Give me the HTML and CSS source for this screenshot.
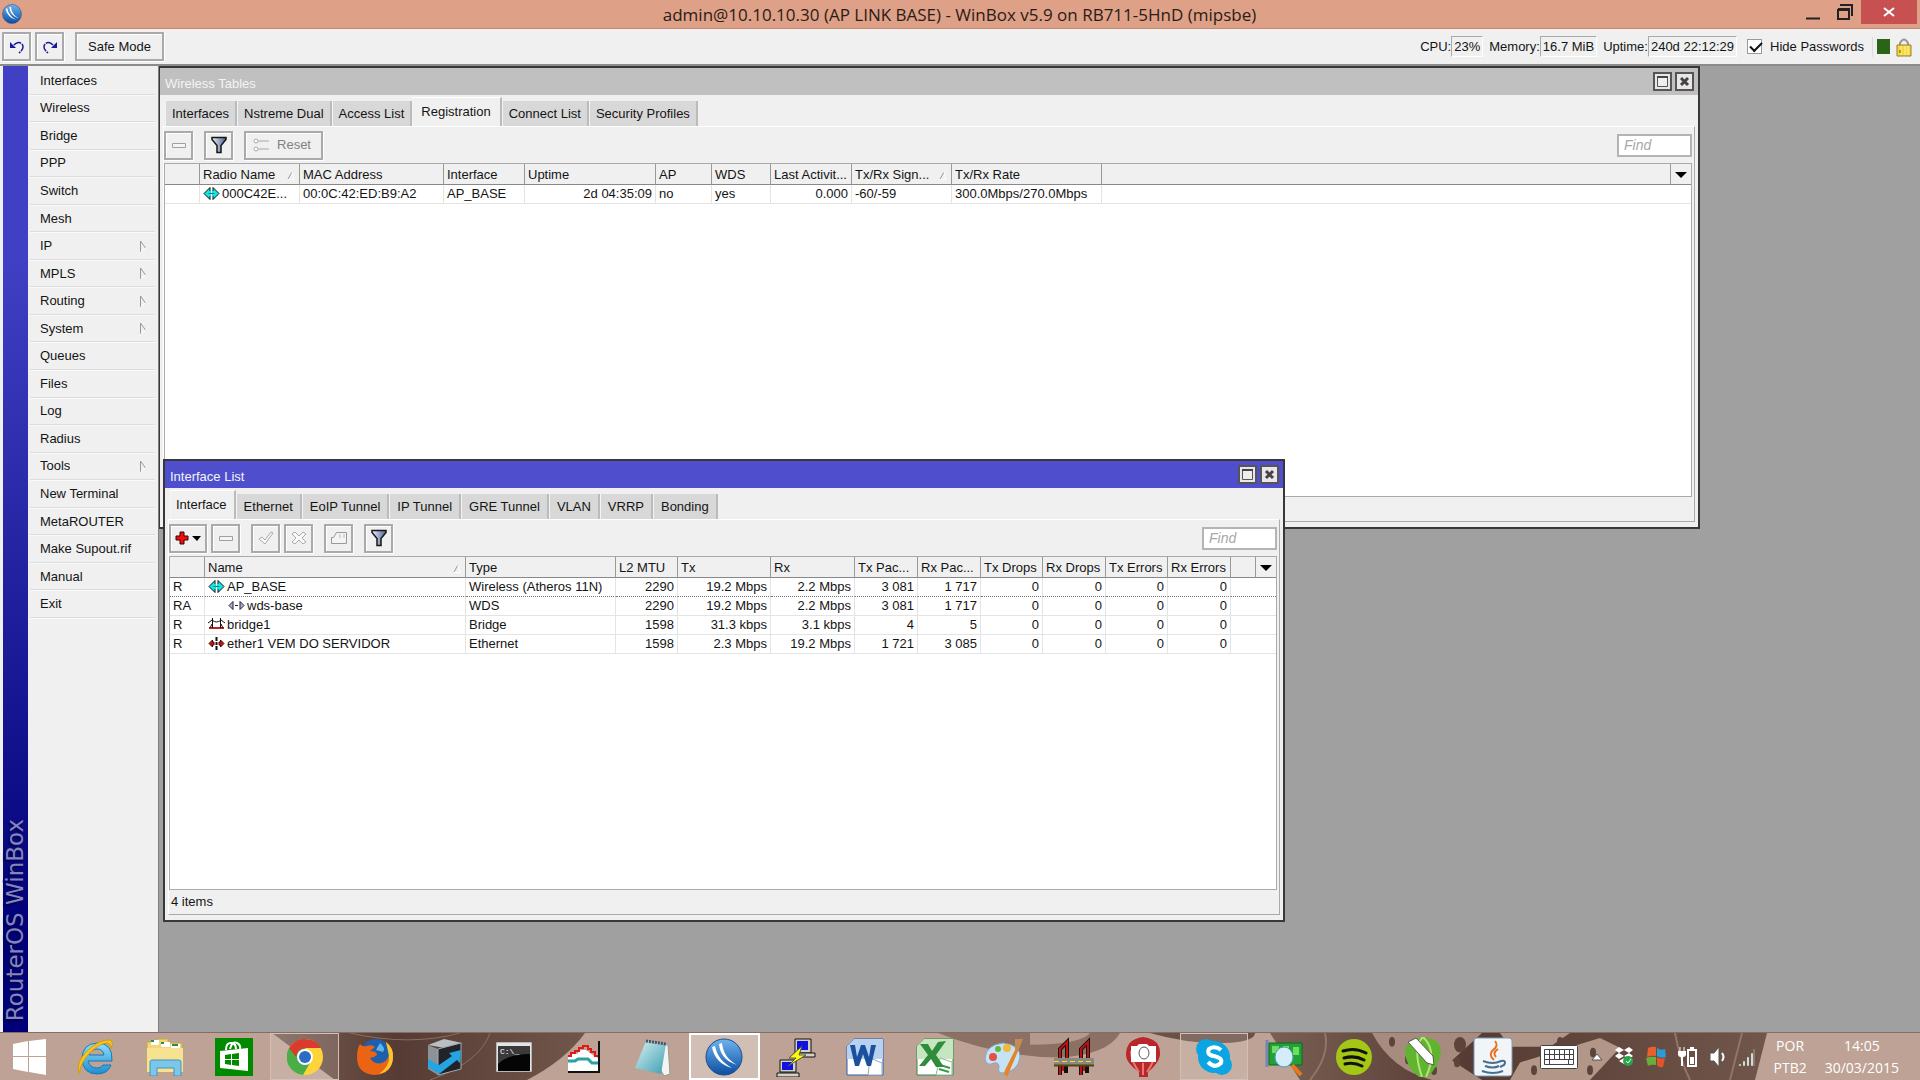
FILE: index.html
```html
<!DOCTYPE html>
<html lang="en">
<head>
  <meta charset="UTF-8">
  <meta name="viewport" content="width=device-width,initial-scale=1.0">
  <title>WinBox v5.9</title>
  <link rel="stylesheet" href="styles.css">
</head>
<body>
  <!-- shared icons -->
  <svg class="defs">
    <linearGradient id="g-blue" x1="0" y1="0" x2="0" y2="1"><stop offset="0" stop-color="#6db4ee"/><stop offset="1" stop-color="#0c4da2"/></linearGradient>
    <linearGradient id="g-ie" x1="0" y1="0" x2="0" y2="1"><stop offset="0" stop-color="#8fe0fb"/><stop offset="1" stop-color="#1d8ed0"/></linearGradient>
    <linearGradient id="g-paper" x1="0" y1="0" x2="1" y2="1"><stop offset="0" stop-color="#d8f1f5"/><stop offset="1" stop-color="#3d9fb0"/></linearGradient>
    <linearGradient id="g-funnel"><stop offset="0" stop-color="#eef2fa"/><stop offset="1" stop-color="#4a5e96"/></linearGradient>
    <linearGradient id="g-tank"><stop offset="0" stop-color="#7a5f54"/><stop offset=".4" stop-color="#553b33"/><stop offset="1" stop-color="#71564b"/></linearGradient>
    <symbol id="i-winbox" viewBox="0 0 38 38">
      <ellipse cx="19" cy="19" rx="18" ry="18" fill="url(#g-blue)" stroke="#1c4c8c"/>
      <path d="M7 9c2 11 9 18 20 21-9-5-15-12-17-22zM14 6c1 10 6 17 18 21-9-5-14-12-15-22z" fill="#fff"/>
    </symbol>
    <symbol id="i-wlan" viewBox="0 0 17 15">
      <path d="M1 7.500L7 1.500v12zM16 7.500L10 1.500v12z" fill="#10e8e8" stroke="#111"/>
      <path d="M7 5v5M10 5v5" stroke="#10e8e8" stroke-width="2"/>
      <path d="M5.500 7.500h6" stroke="#088" />
    </symbol>
    <symbol id="i-wds" viewBox="0 0 17 15">
      <path d="M1 7.500L5 3.500v8zM16 7.500L12 3.500v8z" fill="#b9a8e6" stroke="#222"/>
      <path d="M7 7.500h3" stroke="#222"/>
    </symbol>
    <symbol id="i-bridge" viewBox="0 0 17 15">
      <path d="M1 11h15" stroke="#b22" stroke-width="2"/>
      <path d="M4.500 1v10M12.500 1v10M0 6l4-3q4.500 4 9 0l4 3M2 11l2-4M15 11l-2-4" fill="none" stroke="#111"/>
    </symbol>
    <symbol id="i-eth" viewBox="0 0 17 15">
      <path d="M1 7.500L4.500 4v2H6v3H4.500v2zM16 7.500L12.500 4v2H11v3h1.500v2z" fill="#c01818" stroke="#500"/>
      <path d="M8.500 1v4M8.500 6v3M8.500 10v4" stroke="#111" stroke-width="2"/>
    </symbol>
    <symbol id="i-minus" viewBox="0 0 16 16"><path d="M1.500 6.500h13v4h-13z" fill="#f4f4f4" stroke="#a0a0a0"/></symbol>
    <symbol id="i-filter" viewBox="0 0 16 18"><path d="M1 1.500h14v2l-5 6v7H6v-7l-5-6z" fill="url(#g-funnel)" stroke="#161616" stroke-width="1.500"/></symbol>
    <symbol id="i-max" viewBox="0 0 13 13"><path d="M1.500 2.500h10v9h-10z" fill="#eee" stroke="#555"/><path d="M1 2h11" stroke="#444" stroke-width="2"/></symbol>
    <symbol id="i-close" viewBox="0 0 13 13"><path d="M3 3l7 7M10 3l-7 7" stroke="#444" stroke-width="3"/></symbol>
    <symbol id="i-sort" viewBox="0 0 8 9"><path d="M1 8l4-7" stroke="#999"/><path d="M5 1l2 7.500H1" fill="none" stroke="#fff"/></symbol>
    <symbol id="i-sub" viewBox="0 0 8 13"><path d="M1.500 12V1l5 7" fill="none" stroke="#999"/><path d="M6.500 8l-5 4" stroke="#fff"/></symbol>
    <symbol id="i-down" viewBox="0 0 12 6"><path d="M0 0h12L6 6z"/></symbol>
  </svg>

  <header class="titlebar">
    <svg class="logo"><use href="#i-winbox"/></svg>
    <h1>admin@10.10.10.30 (AP LINK BASE) - WinBox v5.9 on RB711-5HnD (mipsbe)</h1>
    <div class="caption">
      <button aria-label="Minimize"><svg width="16" height="18"><path d="M1 15.500h14" stroke="#222" stroke-width="2"/></svg></button>
      <button aria-label="Restore"><svg width="16" height="18"><path d="M3 2h12v11M1 7h11v9H1zM1 6h12" fill="none" stroke="#222" stroke-width="2"/></svg></button>
      <button class="close" aria-label="Close"><svg width="12" height="12"><path d="M1 2l10 8M11 2L1 10" stroke="#fff" stroke-width="2"/></svg></button>
    </div>
  </header>

  <div class="toolbar">
    <button class="btn" aria-label="Undo"><svg width="16" height="14"><path d="M1 2v6h6z" fill="#1a1a9c"/><path d="M5 5c3-4 9-3 9 2 0 3-2 4-4 6" fill="none" stroke="#1a1a9c" stroke-width="1.500" stroke-dasharray="8 1"/></svg></button>
    <button class="btn" aria-label="Redo"><svg width="16" height="14"><path d="M15 2v6H9z" fill="#1a1a9c"/><path d="M11 5C8 1 2 2 2 7c0 3 2 4 4 6" fill="none" stroke="#1a1a9c" stroke-width="1.500" stroke-dasharray="8 1"/></svg></button>
    <button class="btn safe">Safe Mode</button>
    <div class="status">
      <div class="stat">CPU:<output>23%</output></div>
      <div class="stat">Memory:<output>16.7 MiB</output></div>
      <div class="stat">Uptime:<output>240d 22:12:29</output></div>
      <label class="hide"><input type="checkbox" checked>Hide Passwords</label>
      <div class="lights">
        <div class="load"></div>
        <svg width="16" height="20"><path d="M4 10V6q4-7 8 0v4" fill="none" stroke="#999" stroke-width="2"/><path d="M1 8h14v11H1z" fill="#f5d840" stroke="#96802a"/><path d="M5 9v9M9 9v9M12 9v9" stroke="#fff3a0"/><path d="M4 13v3" stroke="#5a4a10"/></svg>
      </div>
    </div>
  </div>

  <main class="main">
    <div class="brand"><span>RouterOS WinBox</span></div>
    <nav class="menu">
      <button>Interfaces</button>
      <button>Wireless</button>
      <button>Bridge</button>
      <button>PPP</button>
      <button>Switch</button>
      <button>Mesh</button>
      <button>IP<svg><use href="#i-sub"/></svg></button>
      <button>MPLS<svg><use href="#i-sub"/></svg></button>
      <button>Routing<svg><use href="#i-sub"/></svg></button>
      <button>System<svg><use href="#i-sub"/></svg></button>
      <button>Queues</button>
      <button>Files</button>
      <button>Log</button>
      <button>Radius</button>
      <button>Tools<svg><use href="#i-sub"/></svg></button>
      <button>New Terminal</button>
      <button>MetaROUTER</button>
      <button>Make Supout.rif</button>
      <button>Manual</button>
      <button>Exit</button>
    </nav>

    <div class="desktop">
      <section class="window wireless">
        <div class="wtitle">
          <h2>Wireless Tables</h2>
          <button aria-label="Maximize"><svg width="13" height="13"><use href="#i-max"/></svg></button>
          <button aria-label="Close"><svg width="13" height="13"><use href="#i-close"/></svg></button>
        </div>
        <div class="tabs">
          <button>Interfaces</button><button>Nstreme Dual</button><button>Access List</button><button class="active">Registration</button><button>Connect List</button><button>Security Profiles</button>
        </div>
        <div class="panel">
          <div class="tools">
            <button class="btn" disabled aria-label="Remove"><svg width="16" height="16"><use href="#i-minus"/></svg></button>
            <button class="btn gap" aria-label="Filter"><svg width="16" height="18"><use href="#i-filter"/></svg></button>
            <button class="btn reset gap" disabled><svg width="16" height="14"><path d="M5 3h11M5 11h11" stroke="#aaa"/><circle cx="3" cy="3" r="2" fill="#fff" stroke="#aaa"/><circle cx="3" cy="11" r="2" fill="#fff" stroke="#aaa"/></svg>Reset</button>
            <input class="find" type="text" placeholder="Find" aria-label="Find">
          </div>
          <div class="grid">
            <table>
              <colgroup><col class="w35"><col class="w100"><col class="w144"><col class="w81"><col class="w131"><col class="w56"><col class="w59"><col class="w81"><col class="w100"><col class="w150"><col><col class="w20"></colgroup>
              <thead>
                <tr><th></th><th>Radio Name<svg class="sort"><use href="#i-sort"/></svg></th><th>MAC Address</th><th>Interface</th><th>Uptime</th><th>AP</th><th>WDS</th><th>Last Activit...</th><th>Tx/Rx Sign...<svg class="sort"><use href="#i-sort"/></svg></th><th>Tx/Rx Rate</th><th></th><th class="more"><svg><use href="#i-down"/></svg></th></tr>
              </thead>
              <tbody>
                <tr><td></td><td><svg class="ico"><use href="#i-wlan"/></svg>000C42E...</td><td>00:0C:42:ED:B9:A2</td><td>AP_BASE</td><td class="num">2d 04:35:09</td><td>no</td><td>yes</td><td class="num">0.000</td><td>-60/-59</td><td>300.0Mbps/270.0Mbps</td><td colspan="2"></td></tr>
              </tbody>
            </table>
          </div>
          <div class="foot"></div>
        </div>
      </section>

      <section class="window interfaces focused">
        <div class="wtitle">
          <h2>Interface List</h2>
          <button aria-label="Maximize"><svg width="13" height="13"><use href="#i-max"/></svg></button>
          <button aria-label="Close"><svg width="13" height="13"><use href="#i-close"/></svg></button>
        </div>
        <div class="tabs">
          <button class="active">Interface</button><button>Ethernet</button><button>EoIP Tunnel</button><button>IP Tunnel</button><button>GRE Tunnel</button><button>VLAN</button><button>VRRP</button><button>Bonding</button>
        </div>
        <div class="panel">
          <div class="tools">
            <button class="btn add" aria-label="Add"><svg width="28" height="16"><path d="M6 2h4v4h4v4h-4v4H6v-4H2V6h4z" fill="#e81010" stroke="#400"/><path d="M18 6h9l-4 5z"/></svg></button>
            <button class="btn" disabled aria-label="Remove"><svg width="16" height="16"><use href="#i-minus"/></svg></button>
            <button class="btn gap" disabled aria-label="Enable"><svg width="16" height="16"><path d="M1 9l3-2 3 3 6-8 2 1-8 11z" fill="#f8f8f8" stroke="#aaa"/></svg></button>
            <button class="btn" disabled aria-label="Disable"><svg width="16" height="16"><path d="M1 4l3-2 4 4 4-4 3 2-4 4 4 4-3 2-4-4-4 4-3-2 4-4z" fill="#f8f8f8" stroke="#aaa"/></svg></button>
            <button class="btn gap" disabled aria-label="Comment"><svg width="18" height="16"><path d="M6.500 2.500h10v11h-15v-6h2z" fill="#f4f4f4" stroke="#999"/><path d="M9 5h2M9 7h2M13 5h2M13 7h2" stroke="#bbb"/></svg></button>
            <button class="btn gap" aria-label="Filter"><svg width="16" height="18"><use href="#i-filter"/></svg></button>
            <input class="find" type="text" placeholder="Find" aria-label="Find">
          </div>
          <div class="grid">
            <table>
              <colgroup><col class="w35"><col class="w261"><col class="w150"><col class="w62"><col class="w93"><col class="w84"><col class="w63"><col class="w63"><col class="w62"><col class="w63"><col class="w62"><col class="w63"><col><col class="w20"></colgroup>
              <thead>
                <tr><th></th><th>Name<svg class="sort"><use href="#i-sort"/></svg></th><th>Type</th><th>L2 MTU</th><th>Tx</th><th>Rx</th><th>Tx Pac...</th><th>Rx Pac...</th><th>Tx Drops</th><th>Rx Drops</th><th>Tx Errors</th><th>Rx Errors</th><th></th><th class="more"><svg><use href="#i-down"/></svg></th></tr>
              </thead>
              <tbody>
                <tr class="current"><td>R</td><td><svg class="ico"><use href="#i-wlan"/></svg>AP_BASE</td><td>Wireless (Atheros 11N)</td><td class="num">2290</td><td class="num">19.2 Mbps</td><td class="num">2.2 Mbps</td><td class="num">3 081</td><td class="num">1 717</td><td class="num">0</td><td class="num">0</td><td class="num">0</td><td class="num">0</td><td colspan="2"></td></tr>
                <tr><td>RA</td><td class="child"><svg class="ico"><use href="#i-wds"/></svg>wds-base</td><td>WDS</td><td class="num">2290</td><td class="num">19.2 Mbps</td><td class="num">2.2 Mbps</td><td class="num">3 081</td><td class="num">1 717</td><td class="num">0</td><td class="num">0</td><td class="num">0</td><td class="num">0</td><td colspan="2"></td></tr>
                <tr><td>R</td><td><svg class="ico"><use href="#i-bridge"/></svg>bridge1</td><td>Bridge</td><td class="num">1598</td><td class="num">31.3 kbps</td><td class="num">3.1 kbps</td><td class="num">4</td><td class="num">5</td><td class="num">0</td><td class="num">0</td><td class="num">0</td><td class="num">0</td><td colspan="2"></td></tr>
                <tr><td>R</td><td><svg class="ico"><use href="#i-eth"/></svg>ether1 VEM DO SERVIDOR</td><td>Ethernet</td><td class="num">1598</td><td class="num">2.3 Mbps</td><td class="num">19.2 Mbps</td><td class="num">1 721</td><td class="num">3 085</td><td class="num">0</td><td class="num">0</td><td class="num">0</td><td class="num">0</td><td colspan="2"></td></tr>
              </tbody>
            </table>
          </div>
          <div class="foot">4 items</div>
        </div>
      </section>
    </div>
  </main>

  <footer class="taskbar">
    <!-- wallpaper showing through the glass -->
    <svg class="wallpaper" viewBox="0 0 1920 48" preserveAspectRatio="none">
      <path d="M272 0h313q-20 28-58 48H335z" fill="url(#g-tank)"/>
      <path d="M350 0q60 14 110 0M430 48Q480 30 490 0" fill="none" stroke="#8a6d61"/>
      <path d="M938 0h182q-12 22-60 25-60 0-122-25z" fill="#8d7064"/>
      <path d="M1030 0h60q-10 12-60 12z" fill="#b49a8d"/>
      <path d="M1150 0h105q0 8-25 10-40 2-80-10z" fill="#6b5046"/>
      <path d="M1270 0h497l-12 48H1300z" fill="url(#g-tank)"/>
      <path d="M1372 0q20 38 60 48h50l-30-20 30-28z" fill="#a78b7e"/>
      <path d="M1500 0h70l-20 14h-40zM1520 30l80-25 20 10-30 33h-80z" fill="#b29789"/>
      <path d="M1310 48q20-25 15-48M1690 48q-10-20-15-48M1730 48l12-48" fill="none" stroke="#927568" stroke-width="2"/>
      <g fill="#5d443b"><ellipse cx="1392" cy="9" rx="3" ry="5"/><ellipse cx="1408" cy="27" rx="3" ry="5"/><ellipse cx="1434" cy="38" rx="3" ry="5"/><ellipse cx="1457" cy="30" rx="3" ry="5"/><ellipse cx="1534" cy="38" rx="3" ry="5"/><ellipse cx="1560" cy="9" rx="3" ry="5"/><ellipse cx="1593" cy="20" rx="3" ry="5"/><ellipse cx="1590" cy="38" rx="3" ry="5"/><ellipse cx="1460" cy="12" rx="6" ry="8"/></g>
    </svg>

    <button class="start" aria-label="Start"><svg width="34" height="36"><path d="M0 5l15-3v15H0zM16 2l17-2v17H16zM0 18h15v15L0 30zM16 18h17v18l-17-3z" fill="#fff"/></svg></button>

    <div class="apps">
      <button aria-label="Internet Explorer"><svg width="38" height="38"><path fill-rule="evenodd" d="M12 23h24Q37 5 21 5 6 6 6 21q1 15 15 15 11 0 14-9h-8q-2 3-6 3-7 0-9-7zm1-6q2-6 8-6t7 6z" fill="url(#g-ie)" stroke="#1a77b5"/><path d="M4 36C-4 24 18 1 34 2q4 2 1 9 0-6-4-6C18 6 2 26 4 36z" fill="#f7c51f" stroke="#d79a08"/></svg></button>
      <button aria-label="File Explorer"><svg width="40" height="38"><path d="M2 4h9l2-3h10v4h14v29H2z" fill="#f2d675" stroke="#c7a84a"/><path d="M6 2h8v5H6zM16 4h9v5h-9zM26 6h9v5h-9z" fill="#fff"/><path d="M6 3h3M16 5h3M27 7h6" stroke="#2a8a4a" stroke-width="2"/><path d="M2 10h36v24H2z" fill="#f7e291"/><path d="M5 38V24q0-2 2-2h27q2 0 2 2v14h-7v-8H12v8z" fill="#7cc6ea" stroke="#4394c4"/></svg></button>
      <button aria-label="Store"><svg width="38" height="38"><path d="M0 0h38v38H0z" fill="#008a00"/><path d="M5 13l28-3v23L5 30z" fill="#fff"/><path d="M11 12q0-8 6-7 4 1 4 6M15 11q2-8 7-6 4 2 3 6" fill="none" stroke="#fff" stroke-width="2"/><path d="M10 17l6-1v5h-6zM17 16l7-1v6h-7zM10 22h6v5l-6-1zM17 22h7v6l-7-1z" fill="#008a00"/></svg></button>
      <button class="open" aria-label="Chrome"><svg width="36" height="36"><circle cx="18" cy="18" r="18" fill="#ffd43a"/><path d="M2 9a18 18 0 0 0 14 27l8-14-6-13z" fill="#4aae48"/><path d="M2 9Q9-1 18 0q11 0 16 9H18q-8 1-9 9z" fill="#dc3a2e"/><circle cx="18" cy="18" r="8" fill="#fff"/><circle cx="18" cy="18" r="6" fill="#2b6cc4"/></svg></button>
      <button aria-label="Firefox"><svg width="38" height="38"><circle cx="20" cy="17" r="16" fill="#1d5fae"/><path d="M24 5q6 5 3 9l-7-2z" fill="#59b7e8"/><path d="M4 6q2 3 7 2 5-2 8 1l-5 4q7 0 7 4-3 3-7 3 4 7 12 5 8-3 7-13l-3-8q8 6 7 16-1 16-18 17Q1 36 1 19 1 10 4 6z" fill="#ea6414"/><path d="M30 4q8 6 7 16-1 13-14 16 11-8 10-18z" fill="#fbc52c"/></svg></button>
      <button aria-label="Remote tool"><svg width="38" height="38"><path d="M2 7l16-6 18 4-12 6z" fill="#b9bec2"/><path d="M2 7l10 4v26L2 31z" fill="#8c9297"/><path d="M12 11l23-6v26l-23 6z" fill="#20242a" stroke="#aaa"/><path d="M2 21l11 6 13-9-3-3 12-3-1 13-3-3-18 14L2 29z" fill="#25a4e2"/></svg></button>
      <button aria-label="Command Prompt"><svg width="36" height="30"><path d="M0 0h36v30H0z" fill="#e4e4e4" stroke="#888"/><path d="M2 4h32v25H2z" fill="#050505"/><path d="M2 4h32v8Q12 12 2 22z" fill="#3a3a3a"/><text x="4" y="12" font-family="Liberation Mono" font-size="8" fill="#fff">C:\_</text></svg></button>
      <button aria-label="Traffic graph"><svg width="32" height="32"><path d="M0 30V16l4-4 5 1 4-4h5l4 3 4 3 4 2v13z" fill="#fff"/><path d="M0 15h3v-3h4v-2h4V7h4V5h5v3h3v3h4v4h3" fill="none" stroke="#e01818" stroke-width="2"/><path d="M0 20h7l3-2h10l4 4h6" fill="none" stroke="#2aa0a0" stroke-width="3"/><path d="M31 0v31H0" fill="none" stroke="#111" stroke-width="2"/></svg></button>
      <button aria-label="Notepad"><svg width="38" height="38"><path d="M12 4l22 3 2 29-6 2z" fill="#f4f4f4" stroke="#998"/><path d="M12 3l20 3-5 30-26-6z" fill="url(#g-paper)"/><path d="M12 3l20 3" stroke="#456" stroke-width="3" stroke-dasharray="2 1"/></svg></button>
      <button class="open front" aria-label="WinBox"><svg width="38" height="38"><use href="#i-winbox"/></svg></button>
      <button aria-label="PuTTY"><svg width="40" height="40"><path d="M19 2h16v14H19zM4 23h16v12H4z" fill="#d4d0c8" stroke="#111"/><path d="M21 4h11v9H21zM6 25h11v8H6z" fill="#1010e0"/><path d="M18 16h21v4H18zM1 36h22v4H1z" fill="#d4d0c8" stroke="#111"/><path d="M26 9L13 21h7l-8 8 18-11h-7z" fill="#ff0" stroke="#555"/></svg></button>
      <button aria-label="Word"><svg width="38" height="38"><path d="M8 1h29v36H1V8z" fill="#fff" stroke="#2b5fae"/><path d="M8 1h29v20H1V8z" fill="#b7d2f0"/><path d="M24 20l12 5v12H22z" fill="#fff" stroke="#9ab"/><path d="M4 7l5 21h4l4-12 4 12h4l5-21h-5l-2 12-4-12h-4l-4 12-2-12z" fill="#1b4f9f"/></svg></button>
      <button aria-label="Excel"><svg width="38" height="38"><path d="M8 1h29v36H1V8z" fill="#fff" stroke="#2e8b43"/><path d="M8 1h29v20H1V8z" fill="#c5e6be"/><path d="M24 20l12 4v13H20z" fill="#fff" stroke="#8b9"/><path d="M24 27l10 3M23 31l10 3" stroke="#3a9a4a" stroke-width="2"/><path d="M4 6h8l4 7 6-9 8-1-10 14 8 12h-8l-5-8-6 7H3l9-11z" fill="#2f8c3b"/></svg></button>
      <button aria-label="Paint"><svg width="40" height="40"><path d="M1 21Q2 8 19 6q18 2 17 15-3 14-17 15-6 0-4-6 0-5-5-4-8 4-9-5z" fill="#c6e3f5" stroke="#7ca9c8"/><circle cx="9" cy="20" r="4" fill="#e05246"/><circle cx="14" cy="12" r="3" fill="#64b545"/><circle cx="23" cy="11" r="4" fill="#f4b93a"/><path d="M32 11l3 1-12 28q-4-2-2-7z" fill="#e78428"/><path d="M31 2h8l-4 10h-4z" fill="#c38c55"/></svg></button>
      <button aria-label="Bridge"><svg width="40" height="40"><path d="M6 38V12l7-7v19M27 38V12l7-7v19M12 28v8M33 28v8" fill="none" stroke="#111" stroke-width="4"/><path d="M6 38V12l7-7v19M27 38V12l7-7v19M9 28v6M30 28v6" fill="none" stroke="#c01010" stroke-width="2"/><path d="M0 21h40v7H0z" fill="#888"/><path d="M0 24.500h40" stroke="#fd0" stroke-dasharray="5 3"/><path d="M0 28.500h40" stroke="#541" stroke-width="2"/></svg></button>
      <button aria-label="Camera"><svg width="38" height="40"><path d="M19 0q18 2 17 18-1 8-12 17v5H15v-5Q2 26 2 18 2 2 19 0z" fill="#b9272b"/><path d="M15 35Q7 24 7 14M23 35q8-11 8-21M19 38V26" fill="none" stroke="#e77a70" stroke-width="2"/><path d="M7 9h6l2-2h8l2 2h7v16H7z" fill="#fff"/><ellipse cx="20" cy="16" rx="5" ry="6" fill="#fff" stroke="#555"/></svg></button>
      <button class="open" aria-label="Skype"><svg width="38" height="38"><circle cx="11" cy="11" r="10" fill="#0aa5e2"/><circle cx="27" cy="27" r="10" fill="#0aa5e2"/><circle cx="19" cy="19" r="16" fill="#0aa5e2"/><path d="M26 12q-6-5-12-1-3 6 5 7 9 2 7 7-6 6-13-1" fill="none" stroke="#fff" stroke-width="4"/></svg></button>
      <button aria-label="Network card"><svg width="38" height="38"><path d="M2 2v27" stroke="#7785b0" stroke-width="3"/><path d="M4 5h33v22H4z" fill="#21a136" stroke="#0b6b1c"/><path d="M7 8h7v7H7zM18 8h6v5h-6zM28 9h6v8h-6z" fill="#6ede5f"/><path d="M27 27l9 10" stroke="#e57a1c" stroke-width="4"/><ellipse cx="19" cy="19" rx="9" ry="10" fill="#d3edfa" stroke="#5597c4"/></svg></button>
      <button aria-label="Spotify"><svg width="38" height="38"><circle cx="19" cy="19" r="18" fill="#a4c614"/><path d="M8 13q12-4 23 2M9 20q11-3 20 2M10 26q9-2 17 2" fill="none" stroke="#111" stroke-width="3" stroke-linecap="round"/></svg></button>
      <button aria-label="CorelDRAW"><svg width="38" height="40"><path d="M19 0q18 2 18 15-2 15-14 25h-8Q2 30 1 15 2 2 19 0z" fill="#5fb52e"/><path d="M19 0Q8 10 18 40M19 0q15 14 3 40" fill="none" stroke="#b8e27d" stroke-width="2"/><path d="M4 5l8-4 17 18 1 9-7-2z" fill="#fff" stroke="#555"/></svg></button>
      <button aria-label="Java"><svg width="40" height="40"><rect x="1" y="1" width="38" height="38" rx="3" fill="#f2f5f7" stroke="#7b9cb5"/><path d="M22 4q4 5-2 9-5 5 1 10M25 12q-6 4-2 8" fill="none" stroke="#e66e1e" stroke-width="2"/><path d="M10 24q10 4 18 0M12 29q8 3 14 0M9 34q11 4 21 0M28 24q6-1 3 4l-4 2" fill="none" stroke="#456f91" stroke-width="2"/></svg></button>
    </div>

    <div class="tray">
      <svg class="kbd" width="38" height="24"><rect x="0.500" y="0.500" width="37" height="23" rx="1" fill="#fff" stroke="#444"/><path d="M4.500 4.500h29v15h-29zM4 9.500h30M4 14.500h30M9.500 4v10M14.500 4v10M19.500 4v10M24.500 4v10M29.500 4v10M9.500 15v4M28.500 15v4" fill="none" stroke="#444"/></svg>
      <svg width="12" height="8"><path d="M1 7l5-6 5 6z" fill="#fff" stroke="#555"/></svg>
      <svg width="20" height="22"><path d="M5 1l5 3-5 3-4-3zM15 1l4 3-4 3-5-3zM5 7l5 3-5 3-4-3zM15 7l4 3-4 3-5-3zM10 12l4 3-4 3-5-3z" fill="#fff"/><circle cx="14" cy="15" r="5" fill="#2aa54a"/><path d="M12 15l2 2 3-4" fill="none" stroke="#fff"/></svg>
      <svg width="22" height="22"><path d="M3 2q4-2 8-1v9q-4-1-9 1z" fill="#e8602c"/><path d="M12 2q4 3 8 1l1 8q-5 2-9-1z" fill="#2a9bd8"/><path d="M1 12q5-2 10-1v8q-5-1-8 1z" fill="#69ae37"/><path d="M12 11q4 3 8 1l-2 9q-4 1-6-2z" fill="#e2542a"/></svg>
      <svg width="20" height="22"><path d="M2 1v4M6 1v4" stroke="#fff"/><path d="M0 5h8v3q0 3-3 3v9H3v-9q-3 0-3-3z" fill="#fff"/><path d="M10 4h8v16h-8zM12 2h4" fill="none" stroke="#fff" stroke-width="2"/><path d="M12 11h4v7h-4z" fill="#fff"/></svg>
      <svg width="18" height="22"><path d="M1 7h4l5-6v20l-5-6H1z" fill="#fff" stroke="#555"/><path d="M13 7q3 4 0 8" fill="none" stroke="#fff" stroke-width="2"/></svg>
      <svg width="18" height="20"><path d="M1 17h2v2H1zM5 14h2v5H5zM9 10h2v9H9zM13 6h2v13h-2z" fill="#fff" stroke="#665" stroke-width=".5"/><path d="M16 2v17" stroke="#a99"/></svg>
      <div class="lang"><span>POR</span><span>PTB2</span></div>
      <div class="clock"><span>14:05</span><span>30/03/2015</span></div>
    </div>
  </footer>
</body>
</html>
```
FILE: styles.css
```css
* {
    box-sizing: border-box;
}
html {
    height: 100%;
}
body {
    margin: 0;
    height: 100%;
    display: flex;
    flex-flow: column;
    overflow: hidden;
    font: 13px/16px "Liberation Sans", Arial, sans-serif;
    color: #141414;
    background: #a0a0a0;
}
button, input {
    font: inherit;
    color: inherit;
    margin: 0;
    padding: 0;
    border: 0;
    background: none;
}
svg {
    display: block;
    flex: none;
}
h1, h2 {
    margin: 0;
    font-weight: normal;
}
.defs {
    position: absolute;
    width: 0;
    height: 0;
}

/* main window title */
.titlebar {
    flex: none;
    display: flex;
    align-items: center;
    height: 29px;
    padding: 0 3px 0 2px;
    background: #dea087;
    border-bottom: 1px solid #c4866f;
}
.titlebar .logo {
    width: 20px;
    height: 20px;
}
.titlebar h1 {
    flex: 1;
    padding: 2px 0 0 100px;
    font: 17px/24px "Open Sans", sans-serif;
    text-align: center;
    color: #2a1c16;
}
.caption {
    display: flex;
    align-self: flex-start;
    height: 24px;
}
.caption button {
    display: flex;
    align-items: center;
    justify-content: center;
    width: 32px;
}
.caption .close {
    width: 56px;
    background: #c75050;
}

/* top toolbar */
.toolbar {
    flex: none;
    display: flex;
    align-items: center;
    gap: 4px;
    height: 37px;
    padding: 0 8px 0 2px;
    background: #f0f0f0;
    border-bottom: 2px solid #8c8c8c;
}
.btn {
    display: flex;
    align-items: center;
    justify-content: center;
    width: 29px;
    height: 29px;
    border: 2px solid #aaa;
    background: #f0f0f0;
    box-shadow: inset 1px 1px #fff, 1px 1px #fff;
}
.btn:disabled {
    color: #808080;
}
.btn.safe {
    width: 89px;
    margin-left: 7px;
}
.status {
    flex: 1;
    display: flex;
    align-items: center;
    justify-content: flex-end;
    gap: 6px;
}
.stat {
    display: flex;
    align-items: center;
}
.stat output {
    height: 21px;
    padding: 2px 2px 0;
    border: 1px solid #aaa;
    border-right-color: #fff;
    border-bottom-color: #fff;
}
.hide {
    display: flex;
    align-items: center;
    gap: 8px;
    margin: 0 2px 0 4px;
}
.hide input {
    appearance: none;
    width: 15px;
    height: 15px;
    border: 1px solid #999;
    background: #fff;
}
.hide input:checked::before {
    content: "";
    display: block;
    width: 10px;
    height: 5px;
    margin: 2px 0 0 2px;
    border-left: 2px solid #111;
    border-bottom: 2px solid #111;
    transform: rotate(-45deg);
}
.lights {
    display: flex;
    align-items: center;
    gap: 6px;
    padding-left: 4px;
    border-left: 1px solid #ddd;
}
.load {
    width: 13px;
    height: 15px;
    background: #2b6416;
}

/* left side */
.main {
    flex: 1;
    min-height: 0;
    display: flex;
    background: #f0f0f0;
}
.brand {
    width: 25px;
    margin-left: 3px;
    display: flex;
    align-items: flex-end;
    justify-content: center;
    padding-bottom: 11px;
    background: linear-gradient(#4040c4, #4040c4 20%, #000078 90%);
}
.brand span {
    writing-mode: vertical-rl;
    transform: rotate(180deg);
    font: 23px/25px "DejaVu Sans", sans-serif;
    color: #8585b8;
    text-shadow: -2px -2px 2px #000050;
    white-space: nowrap;
}
.menu {
    width: 130px;
    height: 552px;
    padding: 1px 3px 0 2px;
    display: flex;
    flex-flow: column;
}
.menu button {
    flex: 1;
    display: flex;
    align-items: center;
    justify-content: space-between;
    padding: 1px 8px 0 10px;
    border-bottom: 1px solid #dcdcdc;
    box-shadow: 0 1px #fafafa;
}
.menu svg {
    width: 8px;
    height: 13px;
}
.desktop {
    flex: 1;
    position: relative;
    overflow: hidden;
    background: #a0a0a0;
    border-left: 1px solid #808080;
}

/* inner windows */
.window {
    position: absolute;
    height: 463px;
    display: flex;
    flex-flow: column;
    background: #f0f0f0;
    border: 2px solid #383838;
}
.wireless {
    left: -1px;
    top: 0;
    width: 1542px;
}
.interfaces {
    left: 4px;
    top: 393px;
    width: 1122px;
}
.wtitle {
    height: 27px;
    display: flex;
    align-items: center;
    gap: 3px;
    padding: 0 4px 0 5px;
    background: #c0c0c0;
    color: #f4f4f4;
}
.focused .wtitle {
    background: #4f4fce;
}
.wtitle h2 {
    flex: 1;
    padding-top: 5px;
    font-size: 13px;
}
.wtitle button {
    width: 19px;
    height: 19px;
    display: flex;
    align-items: center;
    justify-content: center;
    background: #e9e5e9;
    border: 2px solid #555;
}
.tabs {
    height: 31px;
    display: flex;
    align-items: flex-end;
    padding-left: 5px;
}
.tabs button {
    height: 25px;
    padding: 0 6px;
    background: #d8d8d8;
    border-right: 2px solid #bbb;
    border-left: 1px solid #f4f4f4;
}
.tabs .active {
    height: 29px;
    padding: 0 9px 1px 8px;
    background: #f0f0f0;
    border-top: 1px solid #fff;
}
.interfaces .tabs button {
    padding: 0 7px;
}
.interfaces .tabs .active {
    padding: 0 7px 1px 5px;
}
.panel {
    flex: 1;
    display: flex;
    flex-flow: column;
    margin: 0 3px 5px;
    padding-right: 2px;
    border: 1px solid #fff;
    border-right-color: #aaa;
    border-bottom-color: #aaa;
}
.tools {
    display: flex;
    align-items: center;
    gap: 4px;
    height: 36px;
}
.tools .gap {
    margin-left: 7px;
}
.btn.add {
    width: 38px;
}
.btn.reset {
    width: 79px;
    gap: 8px;
    padding-right: 3px;
}
.find {
    width: 75px;
    height: 23px;
    margin-left: auto;
    padding: 0 5px;
    border: 2px solid #b4b4b4;
    background: #fff;
    font-size: 14px;
    font-style: italic;
}
.find::placeholder {
    color: #a8a8a8;
    opacity: 1;
}
.grid {
    flex: 1;
    border: 1px solid #aaa;
    background: #fff;
}
table {
    width: 100%;
    table-layout: fixed;
    border-collapse: separate;
    border-spacing: 0;
}
th, td {
    padding: 0 3px;
    white-space: nowrap;
    overflow: hidden;
    text-align: left;
    font-weight: normal;
}
th {
    height: 21px;
    padding-top: 2px;
    position: relative;
    background: #f0f0f0;
    border-right: 1px solid #999;
    border-bottom: 1px solid #888;
}
th.more {
    border-right: 0;
}
th.more svg {
    width: 12px;
    height: 6px;
    margin: auto;
}
.sort {
    position: absolute;
    right: 4px;
    top: 7px;
    width: 8px;
    height: 9px;
}
td {
    height: 19px;
    border-right: 1px solid #e4e4e4;
    border-bottom: 1px solid #e4e4e4;
}
td:last-child {
    border-right: 0;
}
.num {
    text-align: right;
}
.current td {
    border-bottom: 1px dotted #777;
}
.ico {
    display: inline-block;
    width: 17px;
    height: 15px;
    margin-right: 2px;
    vertical-align: top;
}
.child {
    padding-left: 23px;
}
.foot {
    height: 24px;
    padding: 4px 2px;
}
.w20 { width: 20px; }
.w35 { width: 35px; }
.w56 { width: 56px; }
.w59 { width: 59px; }
.w62 { width: 62px; }
.w63 { width: 63px; }
.w81 { width: 81px; }
.w84 { width: 84px; }
.w93 { width: 93px; }
.w100 { width: 100px; }
.w131 { width: 131px; }
.w144 { width: 144px; }
.w150 { width: 150px; }
.w261 { width: 261px; }

/* taskbar */
.taskbar {
    flex: none;
    position: relative;
    display: flex;
    height: 48px;
    background: #bea295;
    border-top: 1px solid #866d64;
}
.taskbar > * {
    position: relative;
}
.taskbar .wallpaper {
    position: absolute;
    left: 0;
    top: 0;
    width: 100%;
    height: 100%;
}
.start {
    width: 62px;
    padding-left: 13px;
}
.apps {
    flex: 1;
    display: flex;
    gap: 3px;
}
.apps button {
    flex: 1;
    display: flex;
    align-items: center;
    justify-content: center;
}
.apps .open {
    border: 1px solid #d3bfb6;
    background: rgba(255, 255, 255, .15);
}
.apps .front {
    border: 2px solid #fff;
    background: rgba(255, 255, 255, .3);
}
.tray {
    display: flex;
    align-items: center;
    gap: 11px;
    width: 394px;
    padding: 0 21px 0 14px;
    color: #fff;
}
.tray .kbd {
    margin-right: 2px;
}
.lang, .clock {
    display: flex;
    flex-flow: column;
    gap: 6px;
    text-align: center;
    font: 14px/16px "Open Sans", sans-serif;
}
.lang {
    margin-left: auto;
}
.clock {
    margin-left: 7px;
}
```
